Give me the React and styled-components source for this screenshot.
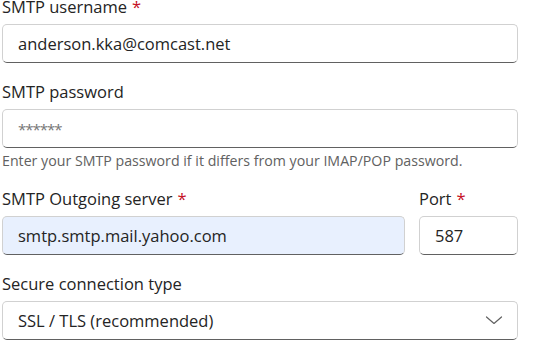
import React from "react";
import styled, { createGlobalStyle } from "styled-components";

const Global = createGlobalStyle`
  html, body {
    margin: 0;
    padding: 0;
    background: #ffffff;
    overflow: hidden;
  }
  * {
    box-sizing: border-box;
  }
`;

const Form = styled.div`
  width: 536px;
  margin-top: -6px;
  padding: 0 18px 0 2px;
  display: flex;
  flex-direction: column;
  gap: 15.5px;
  font-family: "Open Sans", "Noto Sans", sans-serif;
  color: #242424;
`;

const Row = styled.div`
  display: grid;
  grid-template-columns: 1fr 99px;
  column-gap: 14px;
`;

const Field = styled.div`
  display: flex;
  flex-direction: column;
`;

const Label = styled.label`
  font-size: 16.5px;
  line-height: 25px;
  margin-bottom: 5px;
  white-space: nowrap;
`;

const Required = styled.span`
  color: #c50f1f;
  margin-left: 5px;
`;

const Input = styled.input`
  height: 39px;
  width: 100%;
  padding: 0 15px;
  font-family: inherit;
  font-size: 16.5px;
  color: #242424;
  background: ${p => (p.$filled ? "#e8f0fe" : "#ffffff")};
  border: 1px solid #d1d1d1;
  border-bottom-color: #616161;
  border-radius: 5px;
  outline: none;

  &::placeholder {
    color: #767676;
    font-size: 15px;
    letter-spacing: -1px;
  }
`;

const Hint = styled.div`
  margin-top: 3px;
  font-size: 14.2px;
  line-height: 20px;
  color: #616161;
  white-space: nowrap;
`;

const SelectWrap = styled.div`
  position: relative;
`;

const Select = styled.select`
  appearance: none;
  height: 39px;
  width: 100%;
  padding: 0 40px 0 15px;
  font-family: inherit;
  font-size: 16.5px;
  color: #242424;
  background: #ffffff;
  border: 1px solid #d1d1d1;
  border-bottom-color: #616161;
  border-radius: 5px;
  outline: none;
`;

const Chevron = styled.svg`
  position: absolute;
  right: 15px;
  top: 50%;
  transform: translateY(-50%);
  pointer-events: none;
`;

export default function App() {
  return (
    <>
      <Global />
      <Form>
        <Field>
          <Label>
            SMTP username<Required>*</Required>
          </Label>
          <Input readOnly value="anderson.kka@comcast.net" />
        </Field>

        <Field>
          <Label>SMTP password</Label>
          <Input readOnly type="password" placeholder="******" />
          <Hint>Enter your SMTP password if it differs from your IMAP/POP password.</Hint>
        </Field>

        <Row>
          <Field>
            <Label>
              SMTP Outgoing server<Required>*</Required>
            </Label>
            <Input readOnly $filled value="smtp.smtp.mail.yahoo.com" />
          </Field>
          <Field>
            <Label>
              Port<Required>*</Required>
            </Label>
            <Input readOnly value="587" />
          </Field>
        </Row>

        <Field>
          <Label>Secure connection type</Label>
          <SelectWrap>
            <Select defaultValue="ssl">
              <option value="ssl">SSL / TLS (recommended)</option>
              <option value="starttls">STARTTLS</option>
              <option value="none">None</option>
            </Select>
            <Chevron width="18" height="10" viewBox="0 0 18 10" fill="none">
              <path d="M1.5 2 L9 8.5 L16.5 2" stroke="#616161" strokeWidth="1.2" strokeLinecap="round" strokeLinejoin="round" />
            </Chevron>
          </SelectWrap>
        </Field>
      </Form>
    </>
  );
}
